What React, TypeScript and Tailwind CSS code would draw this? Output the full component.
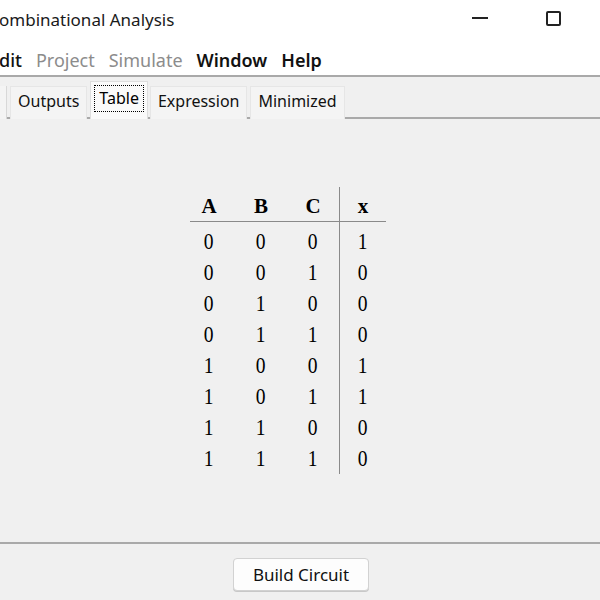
import React from 'react';

const rows = [
  [0, 0, 0, 1],
  [0, 0, 1, 0],
  [0, 1, 0, 0],
  [0, 1, 1, 0],
  [1, 0, 0, 1],
  [1, 0, 1, 1],
  [1, 1, 0, 0],
  [1, 1, 1, 0],
];

const ui = { fontFamily: '"Noto Sans", "Open Sans", sans-serif' };
const serif = { fontFamily: '"Liberation Serif", "DejaVu Serif", serif' };

const Tab: React.FC<{ label: string; selected?: boolean }> = ({ label, selected }) =>
  selected ? (
    <div className="h-[38px] mt-[4px] px-[3px] pt-[3px] bg-[#fafafa] border border-b-0 border-[#dedede]">
      <div className="h-[27px] px-[4px] pb-[2px] border border-dotted border-black flex items-center text-[16px] leading-none text-black">
        {label}
      </div>
    </div>
  ) : (
    <div className="h-[33px] mt-[9px] px-[7px] pb-[5px] bg-[#f4f4f4] border border-b-0 border-[#e6e6e6] flex items-center text-[16px] leading-none text-[#111]">
      {label}
    </div>
  );

const Digit: React.FC<{ v: number }> = ({ v }) => (
  <span className="inline-block text-[23px] leading-none scale-x-[0.85] text-black">{v}</span>
);

export default function App() {
  return (
    <div className="w-[600px] h-[600px] overflow-hidden bg-[#f0f0f0] flex flex-col" style={ui}>
      {/* title bar */}
      <div className="h-[40px] bg-white flex items-center shrink-0">
        <span className="text-[17px] text-[#1a1a1a] -ml-[1px]">ombinational Analysis</span>
        <div className="flex-1" />
        <div className="w-[16px] h-[1.5px] bg-[#222] mr-[58px] -mt-[4px]" />
        <div className="w-[15px] h-[15px] border-2 border-[#222] rounded-[2px] mr-[39px] -mt-[4px]" />
      </div>

      {/* menu bar */}
      <div className="h-[35px] bg-white flex items-center gap-[14px] text-[18px] shrink-0 pt-[5px]">
        <span className="text-[#111] font-medium -ml-[1px]">dit</span>
        <span className="text-[#8c8c8c]">Project</span>
        <span className="text-[#8c8c8c]">Simulate</span>
        <span className="text-[#111] font-semibold">Window</span>
        <span className="text-[#111] font-semibold">Help</span>
      </div>

      {/* tabs */}
      <div className="h-[44px] border-t-2 border-b-2 border-[#a9a9a9] flex items-start shrink-0">
        <div className="w-[7px] h-[33px] mt-[9px] border-r border-[#d8d8d8] bg-[#f4f4f4]" />
        <div className="w-[3px]" />
        <Tab label="Outputs" />
        <div className="w-[3px]" />
        <Tab label="Table" selected />
        <div className="w-[2px]" />
        <Tab label="Expression" />
        <div className="w-[3px]" />
        <Tab label="Minimized" />
      </div>

      {/* truth table */}
      <div className="flex-1 flex items-center pl-[183px]">
        <div className="flex" style={serif}>
          <div className="border-r border-[#8a8a8a]">
            <div className="h-[34px] pt-[6px] flex">
              {['A', 'B', 'C'].map((h) => (
                <div key={h} className="w-[52px] flex items-center justify-center text-[21px] font-bold text-black">
                  {h}
                </div>
              ))}
            </div>
            <div className="ml-[7px] h-[1px] bg-[#8a8a8a]" />
            <div className="pt-[4px]">
              {rows.map((r, i) => (
                <div key={i} className="h-[31px] flex">
                  {r.slice(0, 3).map((v, j) => (
                    <div key={j} className="w-[52px] flex items-center justify-center">
                      <Digit v={v} />
                    </div>
                  ))}
                </div>
              ))}
            </div>
          </div>
          <div className="w-[46px]">
            <div className="h-[34px] pt-[6px] flex items-center justify-center text-[21px] font-bold text-black">
              x
            </div>
            <div className="h-[1px] bg-[#8a8a8a]" />
            <div className="pt-[4px]">
              {rows.map((r, i) => (
                <div key={i} className="h-[31px] flex items-center justify-center">
                  <Digit v={r[3]} />
                </div>
              ))}
            </div>
          </div>
        </div>
      </div>

      {/* bottom */}
      <div className="h-[58px] border-t-2 border-[#a9a9a9] flex justify-center pt-[14px] pl-[2px] shrink-0">
        <button className="w-[136px] h-[33px] bg-[#fdfdfd] border border-[#d2d2d2] rounded-[4px] shadow-[0_1px_0_#c8c8c8] text-[17px] text-[#111] flex items-center justify-center">
          Build Circuit
        </button>
      </div>
    </div>
  );
}
